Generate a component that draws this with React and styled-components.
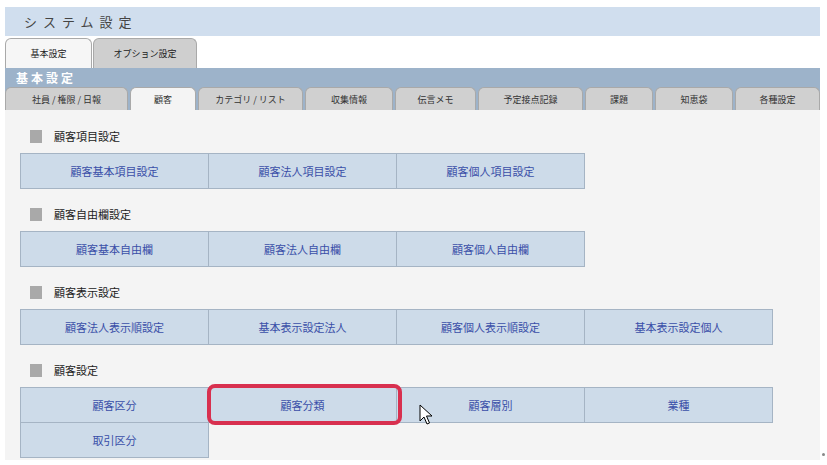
import React from 'react';
import styled, { createGlobalStyle } from 'styled-components';

const Global = createGlobalStyle`
	body {
		margin: 0;
		background: #ffffff;
		font-family: "Noto Sans CJK JP", "Noto Sans", sans-serif;
	}
`;

const Page = styled.div`
	width: 820px;
	height: 465px;
	padding: 7px 0 0 5px;
	box-sizing: border-box;
	position: relative;
`;

const TitleBar = styled.div`
	height: 29px;
	background: #d0deee;
	display: flex;
	align-items: center;
	padding-left: 19px;
	font-size: 13px;
	letter-spacing: 6px;
	color: #444;
`;

const TopTabs = styled.div`
	display: flex;
	align-items: flex-end;
	height: 32px;
	gap: 1px;
`;

const TopTab = styled.div`
	width: ${p => p.w}px;
	height: 30px;
	box-sizing: border-box;
	border: 1px solid #a9a9a9;
	border-bottom: none;
	border-radius: 6px 6px 0 0;
	background: ${p => (p.active ? '#f6f6f6' : '#cfcfcf')};
	display: flex;
	align-items: center;
	justify-content: center;
	font-size: 9px;
	color: #222;
`;

const Band = styled.div`
	background: #9db3ca;
`;

const BandTitle = styled.div`
	height: 18px;
	display: flex;
	align-items: center;
	padding-left: 11px;
	font-size: 12px;
	font-weight: bold;
	letter-spacing: 3px;
	color: #ffffff;
`;

const SubTabs = styled.div`
	display: flex;
	align-items: flex-end;
	height: 24px;
	gap: 2px;
`;

const SubTab = styled.div`
	width: ${p => p.w}px;
	height: 23px;
	box-sizing: border-box;
	border: 1px solid #a9a9a9;
	border-bottom: none;
	border-radius: 6px 6px 0 0;
	background: ${p => (p.active ? '#f4f4f4' : '#d0d0d0')};
	display: flex;
	align-items: center;
	justify-content: center;
	font-size: 9px;
	color: #333;
`;

const Content = styled.div`
	background: #f4f4f4;
	height: 350px;
	padding: 16px 0 0 15px;
	box-sizing: border-box;
`;

const Section = styled.div`
	margin-bottom: 16px;
`;

const SectionHead = styled.div`
	display: flex;
	align-items: center;
	gap: 12px;
	height: 20px;
	padding-left: 10px;
	margin-bottom: 7px;
	font-size: 11px;
	color: #222;
`;

const Square = styled.span`
	width: 12px;
	height: 13px;
	background: #a9a9a9;
`;

const Grid = styled.div`
	display: grid;
	grid-template-columns: repeat(4, 188px);
`;

const Button = styled.div`
	position: relative;
	height: 36px;
	box-sizing: border-box;
	border: 1px solid #a5b4c4;
	margin: 0 -1px -1px 0;
	background: #cddbe9;
	display: flex;
	align-items: center;
	justify-content: center;
	font-size: 11px;
	color: #3a4fa8;

	${p =>
		p.highlight &&
		`
		&::after {
			content: '';
			position: absolute;
			z-index: 2;
			left: -2px;
			right: -6px;
			top: -4px;
			bottom: -3px;
			border: 4px solid #d8304f;
			border-radius: 8px;
		}
	`}
`;

const Cursor = styled.svg`
	position: absolute;
	left: 419px;
	top: 404px;
`;

const Dot = styled.span`
	position: absolute;
	left: 822px;
	top: 453px;
	width: 3px;
	height: 3px;
	border-radius: 50%;
	background: #888;
`;

const subTabs = [
	['社員 / 権限 / 日報', 123],
	['顧客', 66, true],
	['カテゴリ / リスト', 105],
	['収集情報', 88],
	['伝言メモ', 81],
	['予定接点記録', 105],
	['課題', 68],
	['知恵袋', 78],
	['各種設定', 85]
];

const sections = [
	{ title: '顧客項目設定', items: ['顧客基本項目設定', '顧客法人項目設定', '顧客個人項目設定'] },
	{ title: '顧客自由欄設定', items: ['顧客基本自由欄', '顧客法人自由欄', '顧客個人自由欄'] },
	{ title: '顧客表示設定', items: ['顧客法人表示順設定', '基本表示設定法人', '顧客個人表示順設定', '基本表示設定個人'] },
	{ title: '顧客設定', items: ['顧客区分', '顧客分類', '顧客層別', '業種', '取引区分'] }
];

export default function App() {
	return (
		<Page>
			<Global />
			<TitleBar>システム設定</TitleBar>
			<TopTabs>
				<TopTab w={87} active>基本設定</TopTab>
				<TopTab w={104}>オプション設定</TopTab>
			</TopTabs>
			<Band>
				<BandTitle>基本設定</BandTitle>
				<SubTabs>
					{subTabs.map(([label, w, active]) => (
						<SubTab key={label} w={w} active={active}>
							{label}
						</SubTab>
					))}
				</SubTabs>
			</Band>
			<Content>
				{sections.map(s => (
					<Section key={s.title}>
						<SectionHead>
							<Square />
							{s.title}
						</SectionHead>
						<Grid>
							{s.items.map(item => (
								<Button key={item} highlight={item === '顧客分類'}>
									{item}
								</Button>
							))}
						</Grid>
					</Section>
				))}
			</Content>
			<Cursor width="14" height="22" viewBox="0 0 14 22">
				<path d="M1 1 L1 17 L5 13 L8 20 L10.5 19 L7.5 12 L13 12 Z" fill="#fff" stroke="#000" strokeWidth="1" strokeLinejoin="round" />
			</Cursor>
			<Dot />
		</Page>
	);
}
